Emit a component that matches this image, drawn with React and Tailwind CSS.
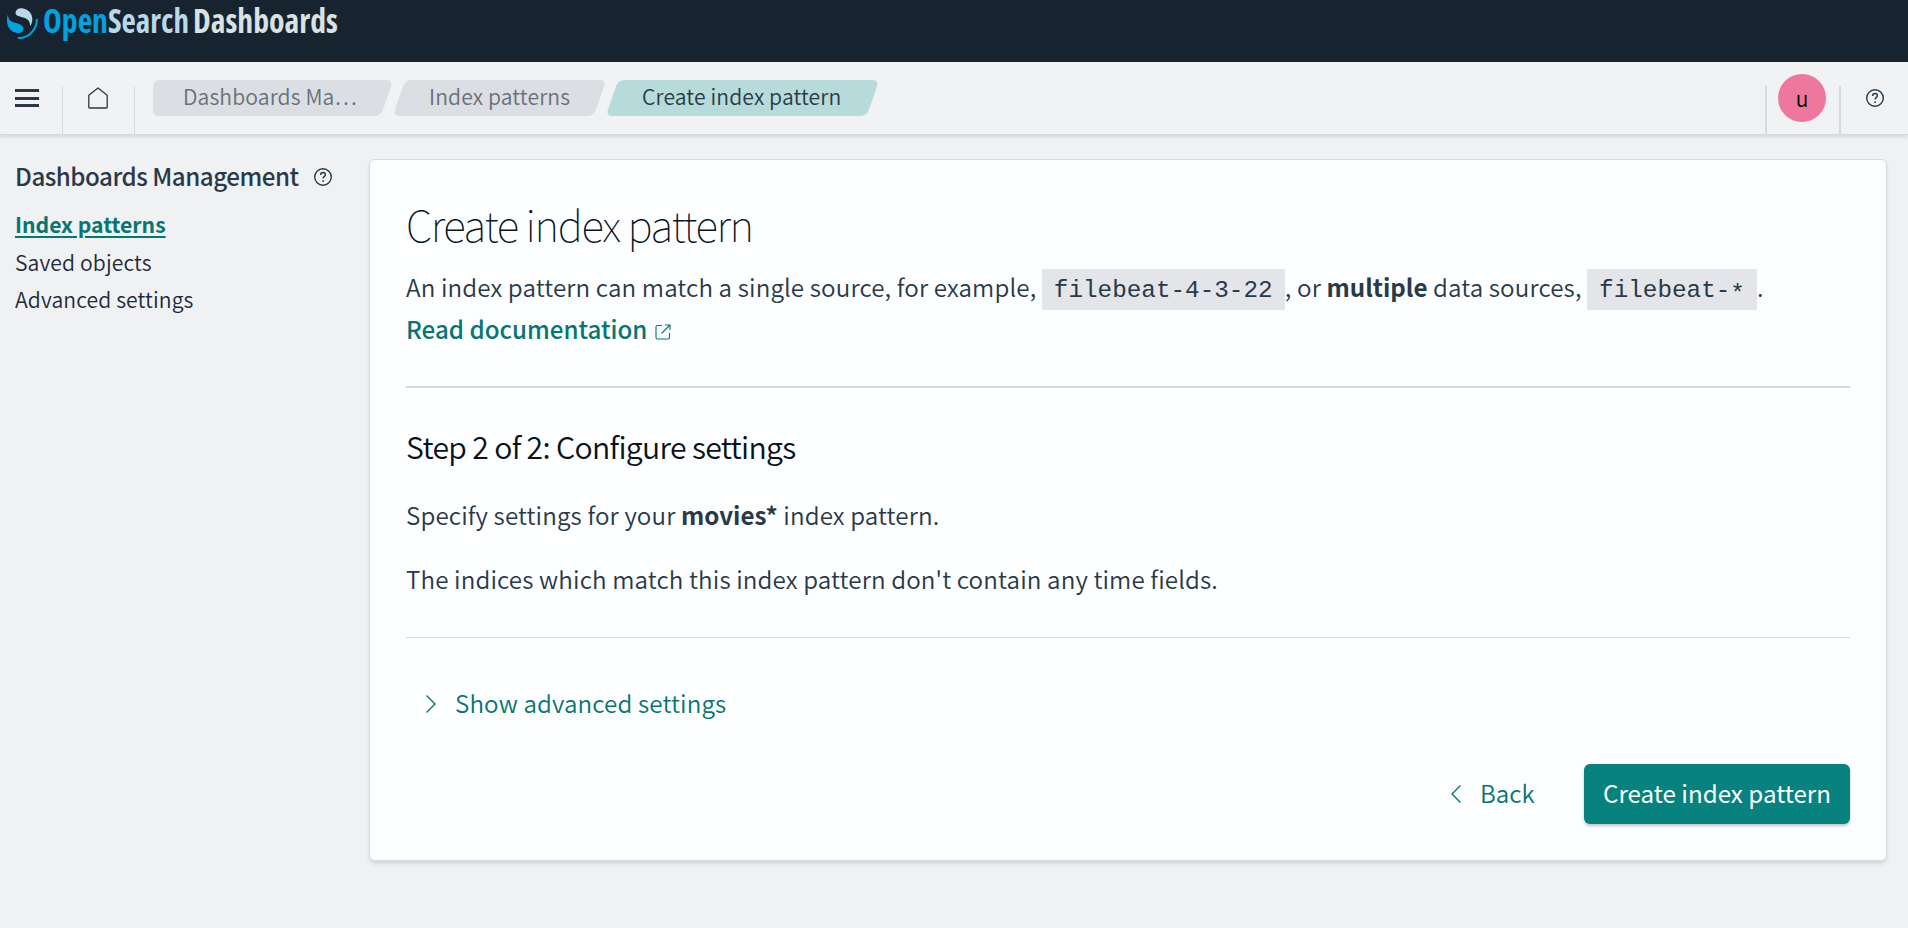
import React from "react";

const sans = "font-['Noto_Sans_CJK_SC','Noto_Sans',sans-serif]";

function HelpIcon({ className }) {
  return (
    <svg viewBox="0 0 18 18" className={className} fill="none" stroke="currentColor">
      <circle cx="9" cy="9" r="8.3" strokeWidth="1.4" />
      <path d="M6.600 6.900C6.600 5.400 7.600 4.500 9 4.500s2.400.9 2.400 2.200c0 1.700-2.300 1.700-2.300 3.900" strokeWidth="1.4" />
      <circle cx="9.1" cy="13.1" r="0.95" fill="currentColor" stroke="none" />
    </svg>
  );
}

function Logo() {
  return (
    <svg viewBox="0 0 345 62" className="h-[62px] w-[345px] overflow-visible">
      <path d="M8 14.500C8 20 11 22 16 23c4 .9 7 2.800 7.500 5c.5 3-2.500 5.400-6 5C11 32.400 6.700 27 7 20c0-2 .3-4 1-5.500z" fill="#00a3e0" />
      <path d="M15.500 12.500C16 9.500 18.500 8 22 8.300C28 9 32.300 13.500 32.300 19C32.300 22 31.600 24.500 30 26C30.500 22 28 19 24 17.800C19 16.500 15.300 15.500 15.500 12.500z" fill="#b9d9eb" />
      <path d="M36.800 19.800c.2 9.500-8.200 18.500-18 18.200" fill="none" stroke="#00a3e0" strokeWidth="2" strokeLinecap="round" />
      <g className="font-['Open_Sans','Noto_Sans',sans-serif] text-[34px] font-bold font-stretch-condensed">
        <text x="43" y="32.500" textLength="65" lengthAdjust="spacingAndGlyphs" fill="#00a3e0">Open</text>
        <text x="108" y="32.500" textLength="81" lengthAdjust="spacingAndGlyphs" fill="#b9d9eb">Search</text>
        <text x="193" y="32.500" textLength="145" lengthAdjust="spacingAndGlyphs" fill="#d9e1e2">Dashboards</text>
      </g>
    </svg>
  );
}

function Crumb({ first, active, className, children }) {
  const bg = active ? "bg-[#b7dbdb]" : "bg-[#dbdee3]";
  return (
    <div className={`relative flex h-9 items-center pb-1 ${className}`}>
      <div className={`absolute inset-y-0 left-[5px] right-[5px] -skew-x-[19deg] rounded-md ${bg}`} />
      {first && <div className={`absolute inset-y-0 left-0 w-12 rounded-l-md ${bg}`} />}
      <span className={`relative whitespace-nowrap ${active ? "text-[#2a3947]" : "text-[#69707a]"}`}>{children}</span>
    </div>
  );
}

function Code({ className, children }) {
  return (
    <code className={`-mb-[3px] mt-[3px] inline-block h-[41px] bg-[#e3e5e9] px-3 align-top font-['Liberation_Mono',monospace] text-[24.300px] leading-[43px] tracking-normal ${className}`}>
      {children}
    </code>
  );
}

export default function App() {
  return (
    <div className={`flex h-[928px] w-[1908px] flex-col overflow-hidden bg-[#f0f1f3] font-[350] text-[#2a3947] ${sans}`}>
      <header className="h-[62px] shrink-0 bg-[#172430]">
        <Logo />
      </header>

      <nav className="relative flex h-[73px] shrink-0 border-b border-[#d5d9e0] bg-[#f0f2f4] shadow-[0_2px_3px_rgba(120,130,150,0.22)]">
        <div className="mt-6 flex w-[63px] border-r border-[#d5d9e0] pl-[15px] pt-[3px]">
          <div className="flex h-[18px] w-6 flex-col justify-between">
            <div className="h-[3px] bg-[#2a3947]" />
            <div className="h-[3px] bg-[#2a3947]" />
            <div className="h-[3px] bg-[#2a3947]" />
          </div>
        </div>
        <div className="mt-6 w-[72px] border-r border-[#d5d9e0] pl-[25px] pt-px">
          <svg viewBox="0 0 20 22" className="h-[22px] w-5" fill="none" stroke="#2a3947" strokeWidth="1.3" strokeLinejoin="round">
            <path d="M.8 8.200L10 1l9.200 7.200V20.200a.8.8 0 0 1-.8.8H1.600a.8.8 0 0 1-.8-.8z" />
          </svg>
        </div>
        <div className="ml-[18px] mt-[18px] flex gap-0.5 text-[21.150px] tracking-[0.110px]">
          <Crumb first className="w-[239px] pl-[30px]">Dashboards Ma…</Crumb>
          <Crumb className="w-[211px] pl-[35px]">Index patterns</Crumb>
          <Crumb active className="w-[271px] pl-[35px]">Create index pattern</Crumb>
        </div>
        <div className="ml-auto mt-6 flex w-[143px]">
          <div className="w-[74px] border-l-2 border-[#d5d9e0]">
            <div className="-mt-3 ml-[11px] flex size-12 items-center justify-center rounded-full bg-[#ee789d] text-[21px] leading-none text-black">
              <span>u</span>
            </div>
          </div>
          <div className="w-[69px] border-l-2 border-[#d5d9e0] pl-[25px] pt-[3px]">
            <HelpIcon className="size-[18px]" />
          </div>
        </div>
      </nav>

      <div className="flex">
        <aside className="w-[369px] shrink-0 pl-[15px] pt-[23px]">
          <div className="flex h-[36px] items-center">
            <h2 className="text-[24.170px] font-medium leading-9 tracking-[-0.500px]">Dashboards Management</h2>
            <HelpIcon className="ml-[15px] mt-[2px] size-[18px]" />
          </div>
          <ul className="mt-[11px] text-[21.150px] leading-[37.500px]">
            <li className="font-bold text-[#077571] underline decoration-2 underline-offset-[3px]">Index patterns</li>
            <li className="tracking-[0.110px] text-[#1f2a37]">Saved objects</li>
            <li className="tracking-[0.110px] text-[#1f2a37]">Advanced settings</li>
          </ul>
        </aside>

        <main className="mt-6 h-[702px] w-[1518px] rounded-md border border-[#d5d9e0] bg-[#fdfeff] px-9 shadow-[0_3px_4px_-1px_rgba(120,130,150,0.3)]">
          <h1 className="mt-[34px] text-[42.300px] font-thin leading-[60px] tracking-[-1.350px] text-[#0a121a]">Create index pattern</h1>
          <p className="mt-3 h-[41px] whitespace-nowrap text-[24.170px] leading-[41px] tracking-[0.125px]">
            An index pattern can match a single source, for example, <Code className="w-[243px]">filebeat-4-3-22</Code>, or <b className="tracking-normal">multiple</b> data sources, <Code className="w-[170px]">filebeat-<span className="relative top-1">*</span></Code>.
          </p>
          <div className="mt-px flex h-[41px] items-center text-[#077571]">
            <a className="text-[24.170px] font-medium leading-[41px]">Read documentation</a>
            <svg viewBox="0 0 16 16" className="ml-2 mt-1.5 size-4" fill="none" stroke="currentColor" strokeWidth="1.1">
              <path d="M7 1.500H2.500a1.500 1.500 0 0 0-1.500 1.500v10.500a1.500 1.500 0 0 0 1.500 1.500H13a1.500 1.500 0 0 0 1.500-1.500V9M10 1h5v5M15 1L6.500 9.500" />
            </svg>
          </div>
          <hr className="mt-[37px] h-0.5 border-0 bg-[#d5d9e0]" />
          <h3 className="mt-[37px] text-[30.200px] leading-[42px] tracking-[-0.680px] text-[#0a121a]">Step 2 of 2: Configure settings</h3>
          <p className="mt-[30px] text-[24.170px] leading-9 tracking-[0.130px]">Specify settings for your <b className="tracking-normal">movies*</b> index pattern.</p>
          <p className="mt-[28px] text-[24.170px] leading-9 tracking-[0.130px]">The indices which match this index pattern don't contain any time fields.</p>
          <hr className="mt-[40px] h-px border-0 bg-[#d5d9e0]" />
          <div className="mt-[48px] flex h-9 items-center pl-5 text-[#077571]">
            <svg viewBox="0 0 10 18" className="h-[18px] w-[10px]" fill="none" stroke="currentColor" strokeWidth="1.4">
              <path d="M.5.500L9 9 .5 17.500" />
            </svg>
            <span className="-mt-px ml-[19px] text-[24.170px] tracking-[0.130px]">Show advanced settings</span>
          </div>
          <div className="mt-[42px] flex h-[60px] items-center justify-end text-[24.170px] text-[#077571]">
            <svg viewBox="0 0 10 18" className="h-[18px] w-[10px]" fill="none" stroke="currentColor" strokeWidth="1.4">
              <path d="M9.500.500L1 9l8.500 8.500" />
            </svg>
            <span className="-mt-px ml-[19px] w-[104px]">Back</span>
            <button className="flex h-[60px] w-[266px] items-center justify-center rounded-md bg-[#07827e] pb-px font-normal text-[#fdfeff] shadow-[0_2px_3px_rgba(100,110,125,0.4)]">
              <span className="whitespace-nowrap">Create index pattern</span>
            </button>
          </div>
        </main>
      </div>
    </div>
  );
}
